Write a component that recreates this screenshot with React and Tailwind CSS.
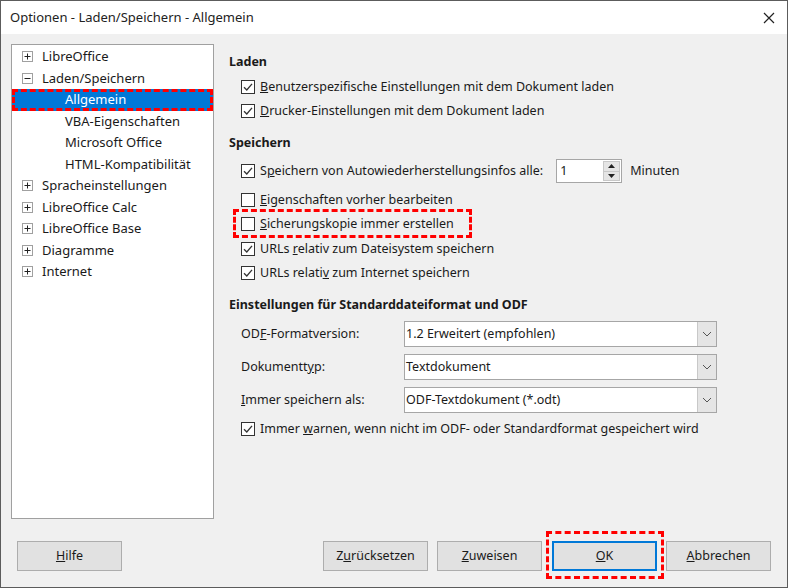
import React from "react";

const font = { fontFamily: '"Noto Sans", "Liberation Sans", sans-serif' };

const Check = ({ checked }) => (
  <svg width="14" height="14" viewBox="0 0 14 14" className="shrink-0">
    <rect x="0.5" y="0.5" width="13" height="13" fill="#fff" stroke="#333" />
    {checked && <path d="M3 7.2 L5.8 10 L11 3.8" fill="none" stroke="#333" strokeWidth="1.3" />}
  </svg>
);

const Row = ({ checked, children, className = "" }) => (
  <div className={"flex h-6 items-center gap-[5px] pl-3 " + className}>
    <Check checked={checked} />
    <span>{children}</span>
  </div>
);

const Expander = ({ open }) => (
  <svg width="11" height="11" viewBox="0 0 11 11" className="shrink-0">
    <rect x="0.5" y="0.5" width="10" height="10" fill="#fff" stroke="#a0a0a0" />
    <path d="M2.5 5.5 H8.5" stroke="#222" />
    {!open && <path d="M5.5 2.5 V8.5" stroke="#222" />}
  </svg>
);

const TreeItem = ({ label, level = 0, expander, selected }) => (
  <div
    className={
      "flex h-[21.5px] items-center " +
      (selected ? "bg-[#0078d7] text-white" : "text-[#1a1a1a]")
    }
  >
    {level === 0 ? (
      <div className="flex w-[30px] justify-center pl-[1px]">
        <Expander open={expander === "open"} />
      </div>
    ) : (
      <div className="w-[53px]" />
    )}
    <span className="text-[13px]">{label}</span>
  </div>
);

const Select = ({ value }) => (
  <div className="flex h-[26px] w-[313px] items-stretch border border-[#a6a6a6] bg-white">
    <div className="flex flex-1 items-center pl-[1px]">{value}</div>
    <div className="flex w-[19px] items-center justify-center border-l border-[#c8c8c8] bg-[#e5e5e5]">
      <svg width="10" height="6" viewBox="0 0 10 6">
        <path d="M1 1 L5 5 L9 1" fill="none" stroke="#555" strokeWidth="1" />
      </svg>
    </div>
  </div>
);

const Button = ({ children, primary, className = "" }) => (
  <div
    className={
      "flex h-[30px] w-[105px] items-center justify-center bg-[#e1e1e1] " +
      (primary ? "border-2 border-[#0078d7]" : "border border-[#adadad]") +
      " " +
      className
    }
  >
    {children}
  </div>
);

const Dashed = ({ className }) => (
  <div className={"pointer-events-none absolute border-[3px] border-dashed border-[#ff0000] " + className} />
);

export default function App() {
  return (
    <div
      style={font}
      className="relative flex h-[588px] w-[788px] flex-col border border-[#5c5c5c] bg-[#f0f0f0] text-[12.5px] text-[#1a1a1a]"
    >
      {/* Title bar */}
      <div className="flex h-[33px] items-center justify-between bg-white pl-[9px] pr-[12px]">
        <span className="text-[13px] text-[#222]">Optionen - Laden/Speichern - Allgemein</span>
        <svg width="12" height="12" viewBox="0 0 12 12">
          <path d="M1 1 L11 11 M11 1 L1 11" stroke="#222" strokeWidth="1.2" />
        </svg>
      </div>

      {/* Body */}
      <div className="flex flex-1 pt-[10px]">
        {/* Tree */}
        <div className="ml-[10px] h-[475px] w-[203px] border border-[#a0a0a0] bg-white pt-[1px]">
          <TreeItem label="LibreOffice" expander="closed" />
          <TreeItem label="Laden/Speichern" expander="open" />
          <TreeItem label="Allgemein" level={1} selected />
          <TreeItem label="VBA-Eigenschaften" level={1} />
          <TreeItem label="Microsoft Office" level={1} />
          <TreeItem label="HTML-Kompatibilität" level={1} />
          <TreeItem label="Spracheinstellungen" expander="closed" />
          <TreeItem label="LibreOffice Calc" expander="closed" />
          <TreeItem label="LibreOffice Base" expander="closed" />
          <TreeItem label="Diagramme" expander="closed" />
          <TreeItem label="Internet" expander="closed" />
        </div>

        {/* Settings */}
        <div className="ml-[15px] flex flex-col pt-[9px]">
          <div className="h-[18px] font-bold leading-[18px]">Laden</div>
          <div className="mt-[4px]">
            <Row checked>
              <u>B</u>enutzerspezifische Einstellungen mit dem Dokument laden
            </Row>
            <Row checked>
              <u>D</u>rucker-Einstellungen mit dem Dokument laden
            </Row>
          </div>

          <div className="mt-[11px] h-[18px] font-bold leading-[18px]">Speichern</div>
          <div className="mt-[7px] flex h-6 items-center gap-[5px] pl-3">
            <Check checked />
            <span>
              S<u>p</u>eichern von Autowiederherstellungsinfos alle:
            </span>
            <div className="ml-[8px] flex h-6 w-[66px] items-stretch border border-[#a6a6a6] bg-white">
              <div className="flex flex-1 items-center pl-[3px]">1</div>
              <div className="my-[1px] mr-[1px] flex w-[17px] flex-col border border-[#c8c8c8] bg-[#e5e5e5]">
                <div className="flex flex-1 items-center justify-center border-b border-[#c8c8c8]">
                  <svg width="7" height="4" viewBox="0 0 7 4">
                    <path d="M0 4 L3.5 0 L7 4 Z" fill="#222" />
                  </svg>
                </div>
                <div className="flex flex-1 items-center justify-center">
                  <svg width="7" height="4" viewBox="0 0 7 4">
                    <path d="M0 0 L3.5 4 L7 0 Z" fill="#222" />
                  </svg>
                </div>
              </div>
            </div>
            <span className="ml-[3px]">Minuten</span>
          </div>
          <Row className="mt-[5px]">
            <u>E</u>igenschaften vorher bearbeiten
          </Row>
          <Row>
            <u>S</u>icherungskopie immer erstellen
          </Row>
          <Row checked className="mt-[1px]">
            URLs <u>r</u>elativ zum Dateisystem speichern
          </Row>
          <Row checked>
            URLs relati<u>v</u> zum Internet speichern
          </Row>

          <div className="mt-[11px] h-[18px] font-bold leading-[18px]">
            Einstellungen für Standarddateiformat und ODF
          </div>
          <div className="mt-[7px] flex flex-col gap-[7px] pl-3">
            <div className="flex items-center">
              <span className="w-[163px]">
                OD<u>F</u>-Formatversion:
              </span>
              <Select value="1.2 Erweitert (empfohlen)" />
            </div>
            <div className="flex items-center">
              <span className="w-[163px]">
                Dokumentt<u>y</u>p:
              </span>
              <Select value="Textdokument" />
            </div>
            <div className="flex items-center">
              <span className="w-[163px]">
                <u>I</u>mmer speichern als:
              </span>
              <Select value="ODF-Textdokument (*.odt)" />
            </div>
          </div>
          <Row checked className="mt-[4px]">
            Immer <u>w</u>arnen, wenn nicht im ODF- oder Standardformat gespeichert wird
          </Row>
        </div>
      </div>

      {/* Buttons */}
      <div className="flex items-center pb-[16px] pl-[16px] pr-[16px]">
        <Button>
          <u>H</u>ilfe
        </Button>
        <div className="flex-1" />
        <div className="flex gap-[9px]">
          <Button>
            Z<u>u</u>rücksetzen
          </Button>
          <Button>
            <u>Z</u>uweisen
          </Button>
          <Button primary className="ml-[1px]">
            <u>O</u>K
          </Button>
          <Button>
            <u>A</u>bbrechen
          </Button>
        </div>
      </div>

      {/* Annotations */}
      <Dashed className="left-[11px] top-[88px] h-[22px] w-[201px]" />
      <Dashed className="left-[232px] top-[208px] h-[29px] w-[239px]" />
      <Dashed className="left-[545px] top-[530px] h-[48px] w-[118px]" />
    </div>
  );
}
